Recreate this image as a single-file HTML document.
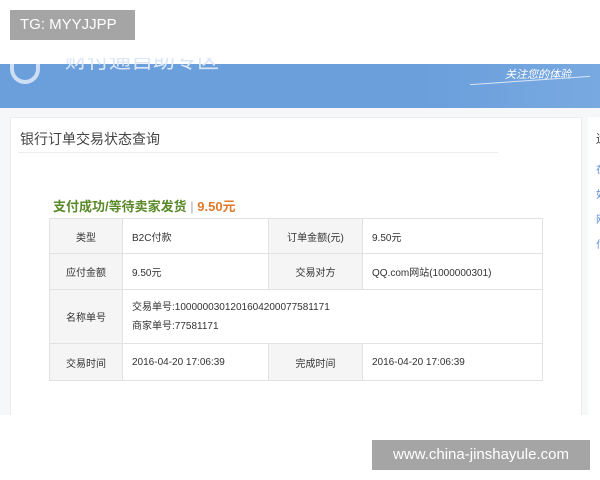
<!DOCTYPE html>
<html><head><meta charset="utf-8"><style>
*{margin:0;padding:0;box-sizing:border-box}
body{width:600px;height:480px;background:#fff;position:relative;overflow:hidden;font-family:"Liberation Sans","Noto Sans CJK SC",sans-serif}
.abs{position:absolute}
.tg{left:10px;top:10px;width:125px;height:30px;background:#a5a5a5;color:#fff;font-size:15px;line-height:30px;padding-left:10px}
.wm{left:372px;top:440px;width:218px;height:30px;background:#a5a5a5;color:#fff;font-size:15px;line-height:30px;text-align:center}
.blue{left:0;top:64px;width:600px;height:44px;background:linear-gradient(90deg,#6a9fdc,#6a9fdc 70%,#79a9e0)}
.bg{left:0;top:108px;width:600px;height:307px;background:#f6f7f8}
.panel{left:10px;top:117px;width:572px;height:298px;background:#fff;border:1px solid #ededed;border-bottom:none}
.side{left:588px;top:117px;width:12px;height:298px;background:#fff}
table{position:absolute;left:49px;top:218px;width:494px;border-collapse:collapse;font-size:10px;color:#333}
td{border:1px solid #e2e2e2;padding-left:9px}
td.h{background:#f5f5f5;text-align:center;padding:0}
</style></head><body>
<div class="abs blue"></div>
<div class="abs" style="left:10px;top:64px;width:30px;height:20px;border:4px solid #e8f0fb;border-top:none;border-radius:0 0 15px 15px;opacity:.8"></div>
<div class="abs" style="left:65px;top:58px;width:170px;height:12px;color:#dbe7f7;font-size:22px;overflow:hidden;line-height:6px">财付通自助专区</div>
<div class="abs" style="left:505px;top:66px;color:#fff;font-size:11px;font-style:italic">关注您的体验</div>
<div class="abs" style="left:470px;top:80px;width:120px;height:1px;background:#d9e6f7;transform:rotate(-4deg)"></div>
<div class="abs bg"></div>
<div class="abs panel"></div>
<div class="abs side"></div>
<div class="abs" style="left:20px;top:129px;font-size:14px;color:#444">银行订单交易状态查询</div>
<div class="abs" style="left:18px;top:152px;width:480px;height:1px;background:#ececec"></div>
<div class="abs" style="left:596px;top:130px;font-size:12px;color:#444">遗</div>
<div class="abs" style="left:596px;top:158px;font-size:10px;color:#5b8ed4;line-height:25px">在<br>如<br>网<br>付</div>
<div class="abs" style="left:53px;top:196px;font-size:13px;font-weight:bold;color:#5a8a2a">支付成功/等待卖家发货 <span style="color:#aaa;font-weight:normal">|</span> <span style="color:#e07a2a">9.50元</span></div>
<table>
<tr style="height:35px"><td class="h" style="width:73px">类型</td><td style="width:146px">B2C付款</td><td class="h" style="width:94px">订单金额(元)</td><td>9.50元</td></tr>
<tr style="height:36px"><td class="h">应付金额</td><td>9.50元</td><td class="h">交易对方</td><td>QQ.com网站(1000000301)</td></tr>
<tr style="height:54px"><td class="h">名称单号</td><td colspan="3" style="line-height:19px">交易单号:1000000301201604200077581171<br>商家单号:77581171</td></tr>
<tr style="height:37px"><td class="h">交易时间</td><td>2016-04-20 17:06:39</td><td class="h">完成时间</td><td>2016-04-20 17:06:39</td></tr>
</table>
<div class="abs tg">TG: MYYJJPP</div>
<div class="abs wm">www.china-jinshayule.com</div>
</body></html>
